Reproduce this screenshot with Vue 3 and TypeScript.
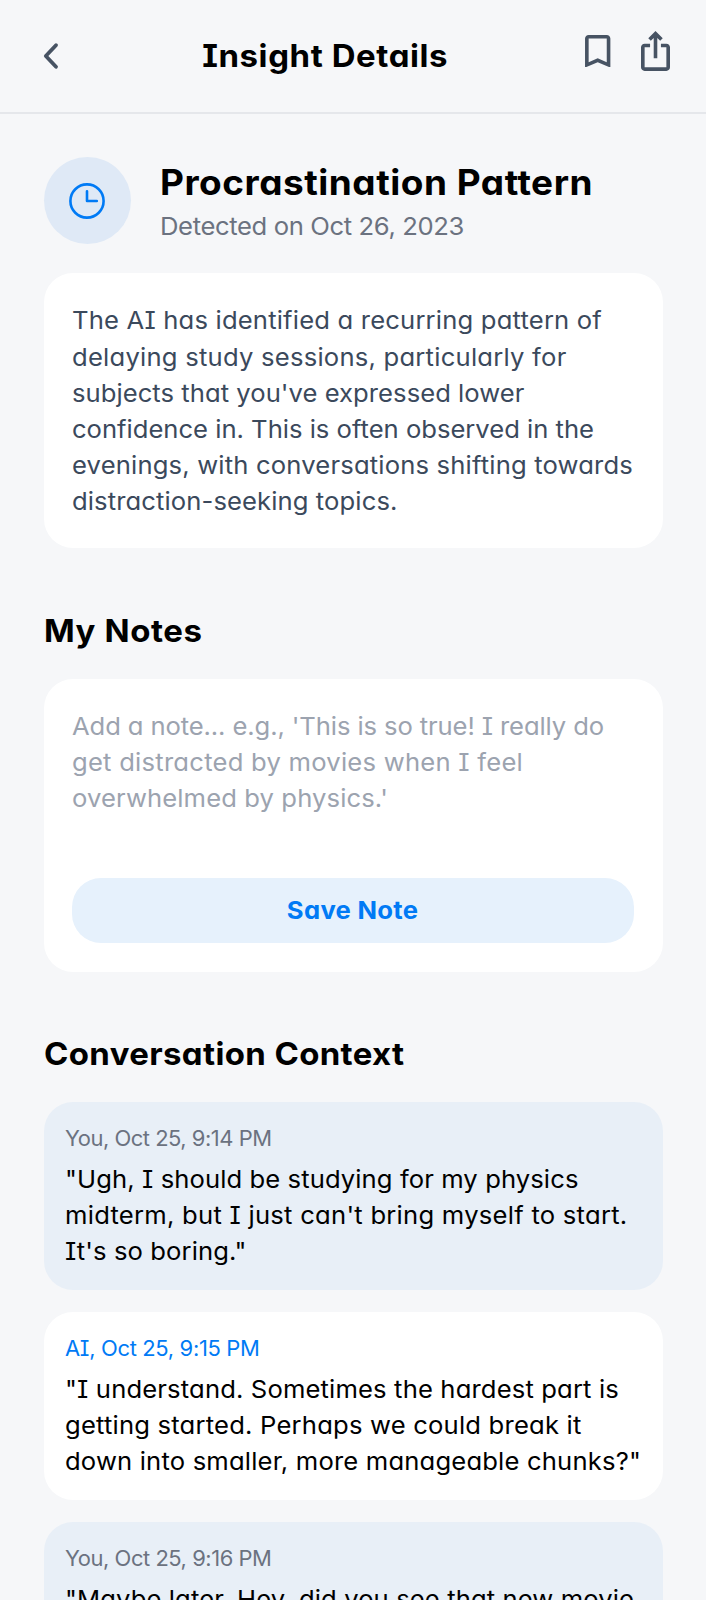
<script setup lang="ts">
interface Line {
  text: string
  width: number
}
interface Message {
  from: 'you' | 'ai'
  meta: Line
  lines: Line[]
}

// Horizontal stretch that gives the letters their wide, round proportions.
const STRETCH = 1.05

// Stretches and tracks a line of text so that it takes up the given width.
const vFit = {
  mounted(el: HTMLElement, binding: { value: number }) {
    const count = (el.textContent ?? '').length
    const natural = el.getBoundingClientRect().width
    el.style.letterSpacing = `${(binding.value / STRETCH - natural) / count}px`
    el.style.transform = `scaleX(${STRETCH})`
  },
}

const summary: Line[] = [
  { text: 'The AI has identified a recurring pattern of', width: 530 },
  { text: 'delaying study sessions, particularly for', width: 494.5 },
  { text: "subjects that you've expressed lower", width: 452.5 },
  { text: 'confidence in. This is often observed in the', width: 522 },
  { text: 'evenings, with conversations shifting towards', width: 561 },
  { text: 'distraction-seeking topics.', width: 325.5 },
]

const placeholder: Line[] = [
  { text: "Add a note... e.g., 'This is so true! I really do", width: 532 },
  { text: 'get distracted by movies when I feel', width: 451 },
  { text: "overwhelmed by physics.'", width: 316 },
]

const messages: Message[] = [
  {
    from: 'you',
    meta: { text: 'You, Oct 25, 9:14 PM', width: 206.5 },
    lines: [
      { text: '"Ugh, I should be studying for my physics', width: 513.5 },
      { text: "midterm, but I just can't bring myself to start.", width: 562.5 },
      { text: 'It\'s so boring."', width: 181.5 },
    ],
  },
  {
    from: 'ai',
    meta: { text: 'AI, Oct 25, 9:15 PM', width: 194.5 },
    lines: [
      { text: '"I understand. Sometimes the hardest part is', width: 554 },
      { text: 'getting started. Perhaps we could break it', width: 516.5 },
      { text: 'down into smaller, more manageable chunks?"', width: 576 },
    ],
  },
  {
    from: 'you',
    meta: { text: 'You, Oct 25, 9:16 PM', width: 206.5 },
    lines: [{ text: '"Maybe later. Hey, did you see that new movie', width: 569 }],
  },
]
</script>

<template>
  <div class="screen">
    <header class="bar">
      <svg class="back" viewBox="0 0 16 28" aria-label="Back">
        <path d="M13 3.2 2.8 14 13 24.8" fill="none" stroke="currentColor" stroke-width="3.8" stroke-linecap="round" stroke-linejoin="round" />
      </svg>
      <h2 class="heading"><span v-fit="246" class="line">Insight Details</span></h2>
      <div class="actions">
        <svg class="bookmark" viewBox="5 3 14 18" aria-label="Bookmark">
          <path fill="currentColor" d="M17 3H7c-1.1 0-1.99.9-1.99 2L5 21l7-3 7 3V5c0-1.1-.9-2-2-2zm0 15l-5-2.18L7 18V5h10v13z" />
        </svg>
        <svg class="share" viewBox="4 1 16 22" aria-label="Share">
          <path fill="currentColor" d="M16 5l-1.42 1.42-1.59-1.59V16h-1.98V4.83L9.42 6.42 8 5l4-4 4 4zm4 5v11c0 1.1-.9 2-2 2H6c-1.11 0-2-.9-2-2V10c0-1.11.89-2 2-2h3v2H6v11h12V10h-3V8h3c1.1 0 2 .89 2 2z" />
        </svg>
      </div>
    </header>

    <main class="content">
      <section class="insight">
        <div class="badge">
          <svg class="clock" viewBox="0 0 36 36">
            <circle cx="18" cy="18" r="16.6" />
            <path d="M18 8.2V18H27.8" />
          </svg>
        </div>
        <div class="titles">
          <h1><span v-fit="433" class="line">Procrastination Pattern</span></h1>
          <p class="date"><span v-fit="304" class="line">Detected on Oct 26, 2023</span></p>
        </div>
      </section>

      <section class="card summary">
        <span v-for="l in summary" :key="l.text" v-fit="l.width" class="line">{{ l.text }}</span>
      </section>

      <h2 class="heading section"><span v-fit="158.5" class="line">My Notes</span></h2>
      <section class="card notes">
        <div class="input">
          <span v-for="l in placeholder" :key="l.text" v-fit="l.width" class="line">{{ l.text }}</span>
        </div>
        <button class="save" type="button"><span v-fit="131.5" class="line">Save Note</span></button>
      </section>

      <h2 class="heading section"><span v-fit="360.5" class="line">Conversation Context</span></h2>
      <section class="chat">
        <article v-for="m in messages" :key="m.meta.text" class="bubble" :class="m.from">
          <div class="meta"><span v-fit="m.meta.width" class="line">{{ m.meta.text }}</span></div>
          <span v-for="l in m.lines" :key="l.text" v-fit="l.width" class="line">{{ l.text }}</span>
        </article>
      </section>
    </main>
  </div>
</template>

<style>
html,
body {
  background: #f6f7f9;
}
</style>

<style scoped>
.screen {
  width: 706px;
  height: 1600px;
  overflow: hidden;
  background: #f6f7f9;
  color: #000;
  font-family: Inter, 'Open Sans', sans-serif;
  font-feature-settings: 'cv08', 'cv11';
  font-optical-sizing: none;
  font-size: 24.4px;
  line-height: 36.2px;
}
.line {
  display: block;
  width: max-content;
  transform-origin: left center;
  white-space: pre;
}
h1,
h2,
p {
  margin: 0;
}
.bar {
  display: grid;
  grid-template-columns: 1fr auto 1fr;
  align-items: center;
  box-sizing: border-box;
  height: 114px;
  padding: 0 36px 0 43px;
  border-bottom: 2px solid #e5e7eb;
  color: #475363;
}
.back {
  width: 16px;
  height: 28px;
}
.heading {
  color: #000;
  font-size: 31.4px;
  font-weight: 700;
  line-height: 44px;
}
.bar .heading {
  margin-right: 63.5px;
}
.bar .line,
.save .line {
  transform-origin: center;
}
.actions {
  display: flex;
  justify-content: flex-end;
  align-items: center;
  gap: 30.5px;
  padding-bottom: 10.4px;
}
.bookmark {
  width: 25.4px;
  height: 32.6px;
}
.share {
  width: 29px;
  height: 39.9px;
}
.content {
  padding: 43.4px 43.5px 0;
}
.insight {
  display: flex;
  align-items: center;
  gap: 29.5px;
  margin-bottom: 29px;
}
.badge {
  display: flex;
  align-items: center;
  justify-content: center;
  width: 87px;
  height: 87px;
  border-radius: 50%;
  background: #dfe9f6;
}
.clock {
  width: 36px;
  height: 36px;
  fill: none;
  stroke: #007af5;
  stroke-width: 2.6;
  stroke-linecap: round;
  stroke-linejoin: round;
}
h1 {
  font-size: 35.2px;
  font-weight: 700;
  line-height: 49.6px;
}
.date {
  color: #6b7280;
}
.card,
.bubble {
  border-radius: 29px;
  background: #fff;
}
.card {
  padding: 29px 28.6px 29px 28.4px;
}
.summary {
  padding-bottom: 28.4px;
  color: #3b495c;
}
.section {
  margin: 60.8px 0 25.8px;
}
.input {
  min-height: 170px;
  color: #9ca3af;
}
.save {
  display: flex;
  align-items: center;
  justify-content: center;
  width: 100%;
  height: 65px;
  padding: 0;
  border: 0;
  border-radius: 29px;
  background: #e6f1fc;
  color: #007af5;
  font: inherit;
  font-weight: 700;
  font-feature-settings: inherit;
  font-optical-sizing: inherit;
}
.chat {
  display: flex;
  flex-direction: column;
  gap: 22px;
}
.bubble {
  padding: 22px 22px 21px 21.4px;
}
.bubble.you {
  background: #e8eff7;
}
.meta {
  margin-bottom: 7.4px;
  color: #6b7280;
  font-size: 20.9px;
  line-height: 29px;
}
.ai .meta {
  color: #007af5;
}
</style>
